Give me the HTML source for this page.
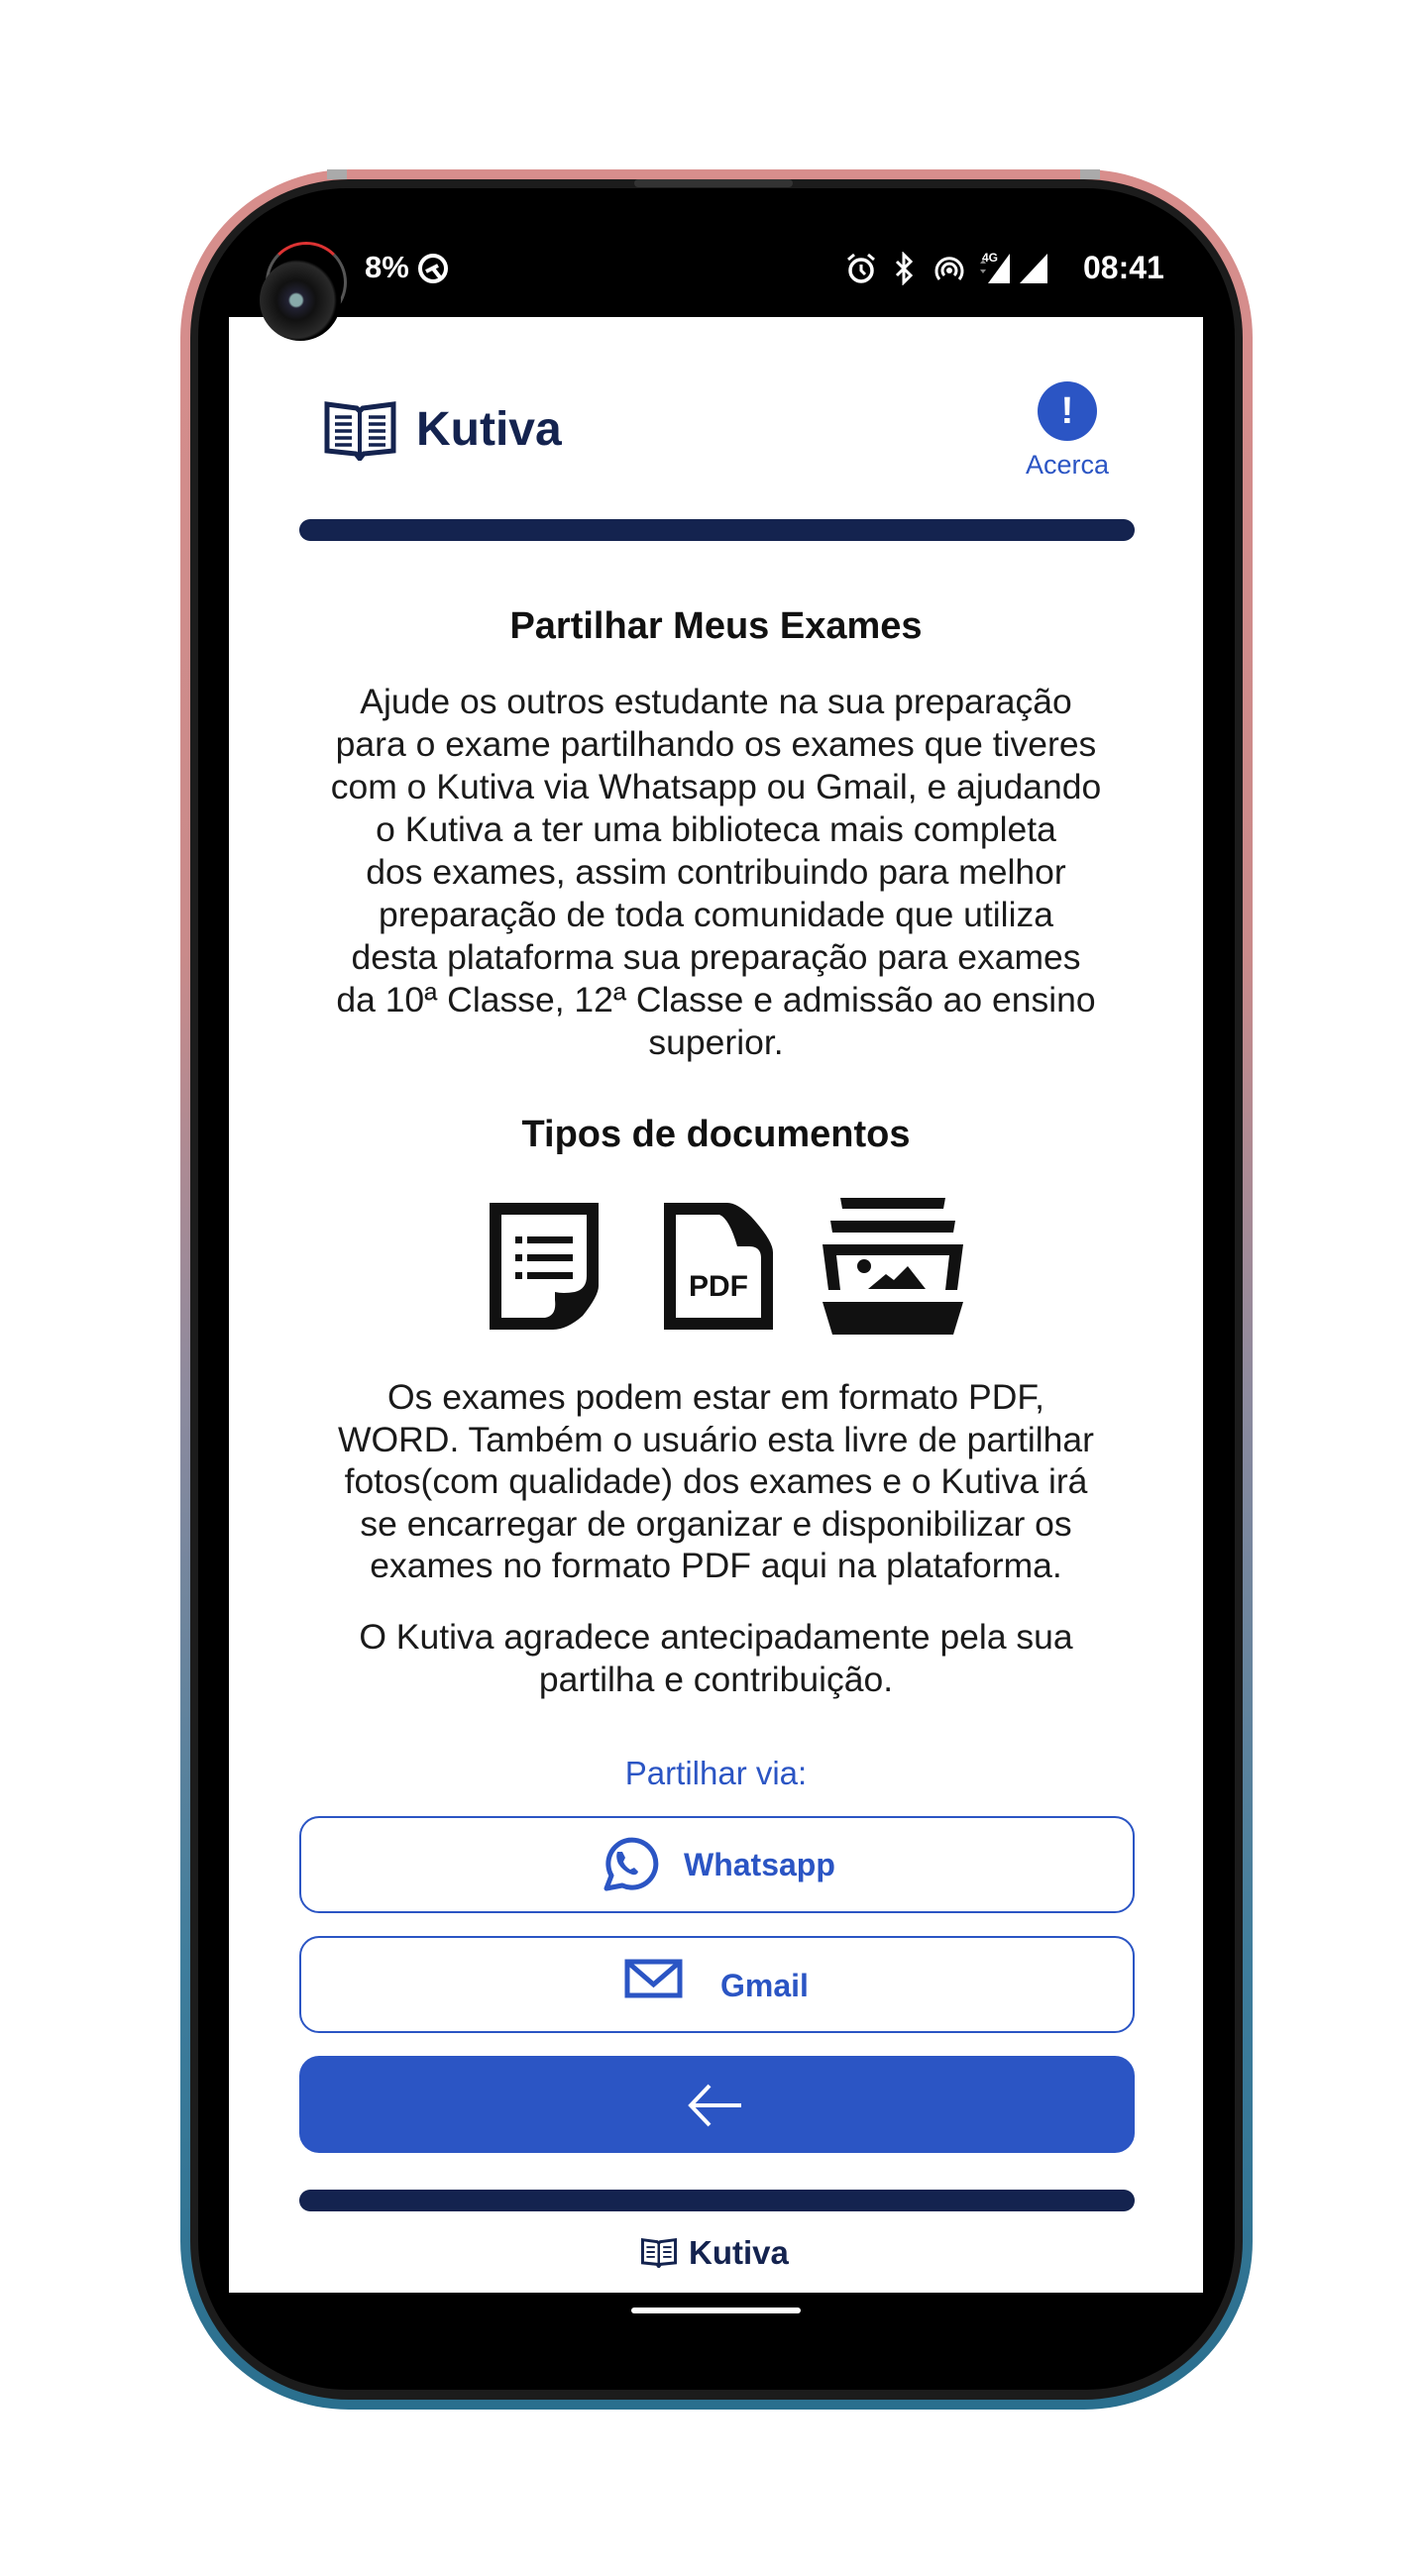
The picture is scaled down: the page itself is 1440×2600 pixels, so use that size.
<!DOCTYPE html>
<html><head><meta charset="utf-8"><style>
*{margin:0;padding:0;box-sizing:border-box}
body{width:1440px;height:2600px;background:#fff;position:relative;overflow:hidden;font-family:"Liberation Sans",Arial,sans-serif}
.abs{position:absolute}
.frame{left:182px;top:171px;width:1082px;height:2261px;border-radius:170px;background:linear-gradient(180deg,#d88e8c 0%,#c98a8a 35%,#8c8a9e 55%,#3f7d9c 80%,#2a6f8e 100%)}
.bez{left:192px;top:181px;width:1062px;height:2241px;border-radius:160px;background:#1c1c1c}
.bez2{left:200px;top:190px;width:1046px;height:2222px;border-radius:150px;background:#000}
.screen{left:231px;top:320px;width:983px;height:1994px;background:#fff}
.c{left:231px;width:983px;text-align:center;white-space:nowrap}
.p{font-size:35.5px;color:#1a1a1a;line-height:43px}
.bar{left:302px;width:843px;height:22px;border-radius:11px;background:#14234f}
.btn{left:302px;width:843px;height:98px;border:2.5px solid #2b55c4;border-radius:20px;background:#fff}
</style></head><body>
<div class="abs frame"></div>
<div class="abs bez"></div>
<div class="abs bez2"></div>
<div class="abs" style="left:330px;top:171px;width:20px;height:10px;background:#aaa"></div>
<div class="abs" style="left:1090px;top:171px;width:20px;height:10px;background:#aaa"></div>
<div class="abs" style="left:640px;top:181px;width:160px;height:8px;border-radius:4px;background:#333"></div>
<div class="abs screen"></div>
<!-- status bar -->
<div class="abs" style="left:268px;top:244px;width:82px;height:82px;border-radius:50%;border:3px solid #555;border-top-color:#d33"></div>
<div class="abs" style="left:262px;top:262px;width:82px;height:82px;border-radius:50%;background:radial-gradient(circle at 45% 50%,#8aa 0 6px,#223 8px,#111 20px,#2a2a2a 38px,#000 41px)"></div>
<div class="abs" style="left:368px;top:252px;color:#fff;font-size:31px;font-weight:bold">8%</div>
<svg class="abs" style="left:420px;top:254px" width="34" height="34" viewBox="0 0 34 34"><circle cx="17" cy="17" r="13" fill="none" stroke="#fff" stroke-width="4"/><path d="M10 20 L22 14 M17 17 L24 26" stroke="#fff" stroke-width="4"/></svg>
<svg class="abs" style="left:852px;top:254px" width="34" height="34" viewBox="0 0 34 34"><circle cx="17" cy="19" r="11" fill="none" stroke="#fff" stroke-width="3.5"/><path d="M17 13 V19 L21 23 M4 8 L10 3 M30 8 L24 3" stroke="#fff" stroke-width="3" fill="none"/></svg>
<svg class="abs" style="left:900px;top:254px" width="24" height="34" viewBox="0 0 24 34"><path d="M5 10 L19 24 L12 31 V3 L19 10 L5 24" fill="none" stroke="#fff" stroke-width="3"/></svg>
<svg class="abs" style="left:940px;top:254px" width="36" height="36" viewBox="0 0 36 36"><path d="M8 28 A13 13 0 1 1 28 28 M13 24 A7 7 0 1 1 23 24" fill="none" stroke="#fff" stroke-width="3"/><circle cx="18" cy="19" r="3" fill="#fff"/></svg>
<svg class="abs" style="left:985px;top:250px" width="80" height="40" viewBox="0 0 80 40"><text x="6" y="14" fill="#fff" font-size="12" font-weight="bold" font-family="Liberation Sans">4G</text><path d="M4 16 l3-4 3 4z M4 22 l3 4 3-4z" fill="#888"/><path d="M34 6 L34 36 L12 36z" fill="#fff"/><path d="M72 6 L72 36 L44 36z" fill="#fff"/></svg>
<div class="abs" style="left:1093px;top:252px;color:#fff;font-size:32px;font-weight:bold">08:41</div>
<!-- header -->
<svg class="abs" style="left:327px;top:405px" width="73" height="60" viewBox="0 0 73 60"><path d="M3 3 L33 7 L36 10 L39 7 L70 3 L70 50 L40 53 L36 58 L32 53 L3 50Z" fill="none" stroke="#14234f" stroke-width="5"/><path d="M36 10 V55" stroke="#14234f" stroke-width="4"/><g stroke="#14234f" stroke-width="3.5"><path d="M11 16h17M11 23h17M11 30h17M11 37h17M11 44h17M45 16h17M45 23h17M45 30h17M45 37h17M45 44h17"/></g></svg>
<div class="abs" style="left:420px;top:406px;font-size:48px;font-weight:bold;color:#14234f">Kutiva</div>
<div class="abs" style="left:1047px;top:385px;width:60px;height:60px;border-radius:50%;background:#2b55c4;color:#fff;font-size:38px;font-weight:bold;text-align:center;line-height:60px">!</div>
<div class="abs" style="left:1017px;top:454px;width:120px;text-align:center;font-size:27px;color:#2b55c4">Acerca</div>
<div class="abs bar" style="top:524px"></div>
<div class="abs c" style="top:611px;font-size:38px;font-weight:bold;color:#111">Partilhar Meus Exames</div>
<div class="abs c p" style="top:687px">
<div>Ajude os outros estudante na sua preparação</div>
<div>para o exame partilhando os exames que tiveres</div>
<div>com o Kutiva via Whatsapp ou Gmail, e ajudando</div>
<div>o Kutiva a ter uma biblioteca mais completa</div>
<div>dos exames, assim contribuindo para melhor</div>
<div>preparação de toda comunidade que utiliza</div>
<div>desta plataforma sua preparação para exames</div>
<div>da 10ª Classe, 12ª Classe e admissão ao ensino</div>
<div>superior.</div>
</div>
<div class="abs c" style="top:1124px;font-size:38px;font-weight:bold;color:#111">Tipos de documentos</div>
<!-- icons -->
<svg class="abs" style="left:488px;top:1208px" width="122" height="140" viewBox="0 0 122 140"><path d="M6 6 H116 V90 Q116 100 100 120 Q84 134 70 134 H6Z M18 18 V122 H62 Q74 120 72 104 L72 96 Q80 98 92 96 Q104 93 104 80 V18Z" fill="#111" fill-rule="evenodd"/><g fill="#111"><rect x="32" y="40" width="7" height="7"/><rect x="44" y="40" width="46" height="7"/><rect x="32" y="58" width="7" height="7"/><rect x="44" y="58" width="46" height="7"/><rect x="32" y="76" width="7" height="7"/><rect x="44" y="76" width="46" height="7"/></g></svg>
<svg class="abs" style="left:664px;top:1208px" width="122" height="140" viewBox="0 0 122 140"><path d="M6 6 H70 Q80 6 94 20 Q116 44 116 56 V134 H6Z M18 18 V122 H104 V62 Q104 50 92 50 H80 Q72 22 62 18Z" fill="#111" fill-rule="evenodd"/><text x="61" y="100" text-anchor="middle" font-size="30" font-weight="bold" font-family="Liberation Sans" fill="#111">PDF</text></svg>
<svg class="abs" style="left:828px;top:1208px" width="146" height="140" viewBox="0 0 146 140"><g fill="#111"><path d="M20 1 H126 L124 12 H22Z"/><path d="M10 24 H136 L134 36 H12Z"/><path d="M2 48 H144 L138 94 H126 L130 59 H16 L20 94 H8Z"/><circle cx="44" cy="70" r="7"/><path d="M48 93 L66 78 L74 84 L88 70 L106 93Z"/><path d="M2 106 H144 L134 139 H12Z"/></g></svg>
<div class="abs c p" style="top:1389px;line-height:42.5px">
<div>Os exames podem estar em formato PDF,</div>
<div>WORD. Também o usuário esta livre de partilhar</div>
<div>fotos(com qualidade) dos exames e o Kutiva irá</div>
<div>se encarregar de organizar e disponibilizar os</div>
<div>exames no formato PDF aqui na plataforma.</div>
</div>
<div class="abs c p" style="top:1631px">
<div>O Kutiva agradece antecipadamente pela sua</div>
<div>partilha e contribuição.</div>
</div>
<div class="abs c" style="top:1771px;font-size:33px;color:#2b55c4">Partilhar via:</div>
<div class="abs btn" style="top:1833px"></div>
<svg class="abs" style="left:602px;top:1852px" width="64" height="60" viewBox="0 0 64 60"><path d="M10 54 L15 41 A24 24 0 1 1 26 51 Z" fill="none" stroke="#2b55c4" stroke-width="5" stroke-linejoin="round"/><path d="M21 17 Q19 22 22 29 Q27 37 36 40 Q41 41 42 37 L38 33 L34 35 Q29 32 27 27 L29 23 L26 17Z" fill="#2b55c4"/></svg>
<div class="abs" style="left:690px;top:1864px;font-size:32px;font-weight:bold;color:#2b55c4">Whatsapp</div>
<div class="abs btn" style="top:1954px"></div>
<svg class="abs" style="left:630px;top:1977px" width="60" height="40" viewBox="0 0 60 40"><rect x="3" y="3" width="53" height="34" fill="none" stroke="#2b55c4" stroke-width="5"/><path d="M4 4 L29.5 26 L55 4" fill="none" stroke="#2b55c4" stroke-width="5"/></svg>
<div class="abs" style="left:727px;top:1986px;font-size:32px;font-weight:bold;color:#2b55c4">Gmail</div>
<div class="abs" style="left:302px;top:2075px;width:843px;height:98px;border-radius:20px;background:#2b55c4"></div>
<svg class="abs" style="left:692px;top:2100px" width="60" height="50" viewBox="0 0 60 50"><path d="M56 25 H6 M24 5 L5 25 L24 45" fill="none" stroke="#fff" stroke-width="4"/></svg>
<div class="abs bar" style="top:2210px"></div>
<svg class="abs" style="left:647px;top:2259px" width="36" height="30" viewBox="0 0 73 60"><path d="M3 3 L33 7 L36 10 L39 7 L70 3 L70 50 L40 53 L36 58 L32 53 L3 50Z" fill="none" stroke="#14234f" stroke-width="6"/><path d="M36 10 V55" stroke="#14234f" stroke-width="5"/><g stroke="#14234f" stroke-width="4"><path d="M11 18h17M11 28h17M11 38h17M45 18h17M45 28h17M45 38h17"/></g></svg>
<div class="abs" style="left:695px;top:2255px;font-size:33px;font-weight:bold;color:#14234f">Kutiva</div>
<div class="abs" style="left:637px;top:2329px;width:171px;height:6px;border-radius:3px;background:#fff"></div>
</body></html>
